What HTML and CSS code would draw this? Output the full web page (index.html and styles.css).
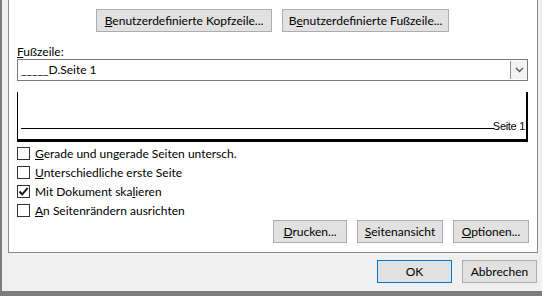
FILE: index.html
```html
<!DOCTYPE html>
<html lang="de">
<head>
<meta charset="utf-8">
<title>Seite einrichten – Kopf-/Fußzeile</title>
<link rel="stylesheet" href="styles.css">
</head>
<body>
<div class="window">
  <div class="panel">
    <div class="top-buttons">
      <button class="btn btn-wide"><u>B</u>enutzerdefinierte Kopfzeile...</button>
      <button class="btn btn-wide2">B<u>e</u>nutzerdefinierte Fußzeile...</button>
    </div>
    <div class="label"><u>F</u>ußzeile:</div>
    <div class="select">
      <span class="select-text">_____D.Seite 1</span>
      <span class="select-arrow">
        <svg width="9" height="6" viewBox="0 0 9 6"><path d="M1 1 L4.5 4.5 L8 1" fill="none" stroke="#555" stroke-width="1.3"/></svg>
      </span>
    </div>
    <div class="preview">
      <div class="preview-row">
        <span class="preview-line"></span>
        <span class="preview-text">Seite 1</span>
      </div>
    </div>
    <div class="checks">
      <label class="check"><span class="box"></span><span><u>G</u>erade und ungerade Seiten untersch.</span></label>
      <label class="check"><span class="box"></span><span><u>U</u>nterschiedliche erste Seite</span></label>
      <label class="check"><span class="box checked"><svg width="11" height="11" viewBox="0 0 11 11"><path d="M1.5 5.5 L4.2 8.3 L9.6 2.2" fill="none" stroke="#111" stroke-width="1.9"/></svg></span><span>Mit Dokument ska<u>l</u>ieren</span></label>
      <label class="check"><span class="box"></span><span><u>A</u>n Seitenrändern ausrichten</span></label>
    </div>
    <div class="panel-buttons">
      <button class="btn btn-drucken"><u>D</u>rucken...</button>
      <button class="btn btn-ansicht"><u>S</u>eitenansicht</button>
      <button class="btn btn-optionen"><u>O</u>ptionen...</button>
    </div>
  </div>
  <div class="dialog-buttons">
    <button class="btn btn-ok">OK</button>
    <button class="btn btn-cancel">Abbrechen</button>
  </div>
</div>
</body>
</html>
```
FILE: styles.css
```css
html, body {
  margin: 0;
  padding: 0;
}
body {
  width: 542px;
  height: 296px;
  overflow: hidden;
  font-family: "Lato", "Noto Sans", sans-serif;
  font-size: 12px;
  color: #000;
  background: #f0f0f0;
}
u { text-decoration: underline; text-underline-offset: 1px; }

.window {
  box-sizing: border-box;
  width: 542px;
  height: 296px;
  background: #f0f0f0;
  border-left: 2px solid #7d7d7d;
  border-bottom: 5px solid #7d7d7d;
  display: flex;
  flex-direction: column;
}

.panel {
  box-sizing: border-box;
  margin-left: 6px;
  width: 530px;
  height: 253px;
  background: #fff;
  border: 1px solid #8a8c94;
  border-top: none;
  padding: 0 9px 0 8px;
  display: flex;
  flex-direction: column;
}

.btn {
  box-sizing: border-box;
  height: 23px;
  padding: 0;
  margin: 0;
  background: #e1e1e1;
  border: 1px solid #adadad;
  font-family: inherit;
  font-size: 12px;
  color: #000;
  line-height: 20px;
}

.top-buttons {
  margin-top: 9px;
  display: flex;
  justify-content: center;
  gap: 10px;
}
.btn-wide { width: 176px; }
.btn-wide2 { width: 167px; }

.label {
  margin-top: 12px;
  height: 15px;
  line-height: 15px;
}

.select {
  box-sizing: border-box;
  height: 22px;
  border: 1px solid #7a7a7a;
  display: flex;
  align-items: stretch;
}
.select-text {
  flex: 1;
  padding-left: 3px;
  line-height: 19px;
}
.select-arrow {
  box-sizing: border-box;
  width: 17px;
  margin: 1px 0 1px 0;
  border-left: 1px solid #8e8e8e;
  background: #f3f3f3;
  display: flex;
  align-items: center;
  justify-content: center;
}

.preview {
  box-sizing: border-box;
  margin-top: 11px;
  height: 49px;
  border-left: 1px solid #000;
  border-right: 2px solid #000;
  border-bottom: 2px solid #000;
  box-shadow: 0 1px 0 #000;
  position: relative;
  display: flex;
  align-items: flex-end;
  padding: 0 1px 7px 3px;
}
.preview-row {
  flex: 1;
  display: flex;
  align-items: center;
  height: 11px;
}
.preview-line {
  flex: 1;
  height: 1px;
  background: #000;
  margin-top: 3px;
}
.preview-text {
  font-family: "Liberation Sans", Arial, sans-serif;
  font-size: 11px;
  line-height: 11px;
  letter-spacing: -0.3px;
  margin-left: -1px;
}

.checks {
  margin-top: 3px;
  display: flex;
  flex-direction: column;
}
.check {
  height: 19px;
  display: flex;
  align-items: center;
  gap: 5px;
}
.box {
  box-sizing: border-box;
  width: 13px;
  height: 13px;
  border: 1px solid #333;
  background: #fff;
  display: flex;
  align-items: center;
  justify-content: center;
}

.panel-buttons {
  display: flex;
  justify-content: flex-end;
  gap: 10px;
  margin-right: -1px;
}
.btn-drucken { width: 74px; }
.btn-ansicht { width: 86px; }
.btn-optionen { width: 76px; }

.dialog-buttons {
  margin-top: 7px;
  display: flex;
  justify-content: flex-end;
  gap: 10px;
  padding-right: 5px;
}
.btn-ok {
  width: 75px;
  border-color: #0078d7;
}
.btn-cancel { width: 75px; }
```
